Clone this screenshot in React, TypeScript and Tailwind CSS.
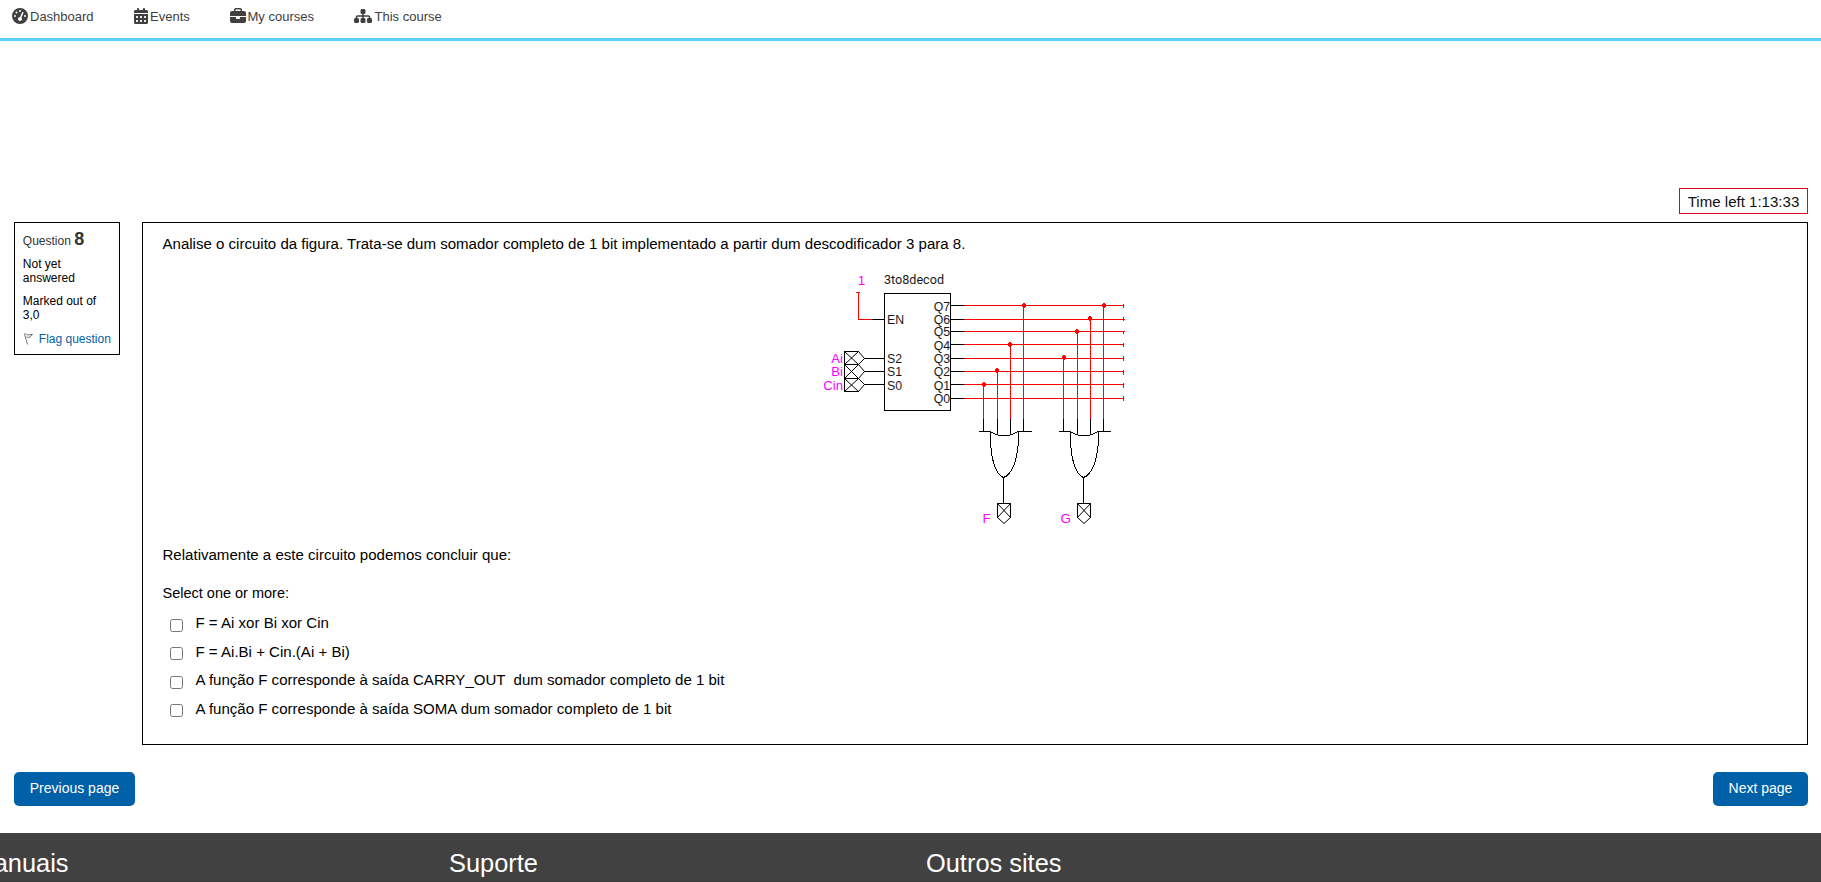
import React from "react";
import { FaGaugeHigh, FaCalendarDays, FaBriefcase, FaSitemap } from "react-icons/fa6";

const outputs = [
  { name: "Q7", y: 305, text: 310.5, end: 1124, tick: [304, 308] },
  { name: "Q6", y: 319, text: 324, end: 1125, tick: [317, 321] },
  { name: "Q5", y: 331, text: 336, end: 1125, tick: [331, 334] },
  { name: "Q4", y: 344, text: 349.5, end: 1124, tick: [343, 347] },
  { name: "Q3", y: 358, text: 363, end: 1124, tick: [356, 361] },
  { name: "Q2", y: 371, text: 376, end: 1124, tick: [370, 375] },
  { name: "Q1", y: 384, text: 389.5, end: 1124, tick: [383, 388] },
  { name: "Q0", y: 398, text: 403, end: 1124, tick: [396, 401] },
];

const inputs = [
  { name: "Ai", pin: "S2", y: 358, top: 351, bottom: 364, text: 363 },
  { name: "Bi", pin: "S1", y: 371, top: 364, bottom: 378, text: 376 },
  { name: "Cin", pin: "S0", y: 384, top: 378, bottom: 391, text: 389.5 },
];

const taps = [
  { x: 983, dot: 982, y: 384 },
  { x: 997, dot: 995, y: 370 },
  { x: 1010, dot: 1008, y: 344 },
  { x: 1023, dot: 1022, y: 305 },
  { x: 1063, dot: 1062, y: 357 },
  { x: 1077, dot: 1075, y: 331 },
  { x: 1090, dot: 1088, y: 318 },
  { x: 1103, dot: 1102, y: 305 },
];

function OrGate({ dx, barEnd }: { dx: number; barEnd: number }) {
  return (
    <g transform={`translate(${dx} 0)`}>
      <path d="M983.5 419V431.5M997.5 419V434M1010.5 419V434M1023.5 419V431.5" />
      <path d={`M979 431.5H990L994 433.5L999 435.5H1009L1014 433.5L1018.5 431.5H${barEnd}`} />
      <path d="M990.5 432V440C991 460 996 475 1003.5 477.5C1012 475 1017.5 460 1018.5 440V432" />
      <path d="M1003.5 477V503M997.5 517.5V503.5H1010.5V517.5" />
      <path
        d="M997.5 517.5L1004 523.5L1010.5 517.5M997.5 503.5L1010.5 517.5M1010.5 503.5L997.5 517.5"
        shapeRendering="geometricPrecision"
      />
    </g>
  );
}

function Circuit() {
  return (
    <svg
      width="310"
      height="260"
      viewBox="820 270 310 260"
      fill="none"
      stroke="#000"
      strokeWidth="1"
      shapeRendering="crispEdges"
      className="block"
    >
      <rect x="884.5" y="293.5" width="66" height="117" />
      <path d="M856 292.5H860M858.5 292V319.5H872" stroke="#f00" />
      <path d="M872 319.5H884" />
      {outputs.map((o) => (
        <g key={o.name}>
          <path d={`M951 ${o.y + 0.5}H964`} />
          <path d={`M964 ${o.y + 0.5}H${o.end}M1123.5 ${o.tick[0]}V${o.tick[1]}`} stroke="#f00" />
        </g>
      ))}
      {taps.map((t) => (
        <g key={t.x} stroke="#f00">
          <path d={`M${t.x + 0.5} ${t.y}V419`} />
          <path d={`M${t.dot} ${t.y - 1}h4v3h-4zM${t.dot + 1} ${t.y - 2}h2v5h-2z`} fill="#f00" stroke="none" />
        </g>
      ))}
      {inputs.map((i) => (
        <g key={i.name}>
          <path d={`M858.5 ${i.top + 0.5}H844.5V${i.bottom + 0.5}H858.5M864 ${i.y + 0.5}H884`} />
          <path
            d={`M858.5 ${i.top + 0.5}L864.5 ${i.y + 0.5}L858.5 ${i.bottom + 0.5}M844.5 ${i.top + 0.5}L858.5 ${i.bottom + 0.5}M858.5 ${i.top + 0.5}L844.5 ${i.bottom + 0.5}`}
            shapeRendering="geometricPrecision"
          />
        </g>
      ))}
      <OrGate dx={0} barEnd={1032} />
      <OrGate dx={80} barEnd={1031} />
      <g stroke="none" fill="#1a1a1a" fontSize="12.3">
        <text x="884" y="284" textLength="60" lengthAdjust="spacingAndGlyphs" fontSize="12.5" fontFamily="Roboto">3to8decod</text>
        <text x="887" y="324">EN</text>
        {inputs.map((i) => (
          <text key={i.pin} x="887" y={i.text}>{i.pin}</text>
        ))}
        {outputs.map((o) => (
          <text key={o.name} x="933.8" y={o.text}>{o.name}</text>
        ))}
      </g>
      <g stroke="none" fill="#f0f" fontSize="13.5">
        <text x="857.7" y="284.5">1</text>
        {inputs.map((i) => (
          <text key={i.name} x="843" y={i.text} fontSize="13.1" textAnchor="end">{i.name}</text>
        ))}
        <text x="982.5" y="523">F</text>
        <text x="1060.5" y="523">G</text>
      </g>
    </svg>
  );
}

const options = [
  "F = Ai xor Bi xor Cin",
  "F = Ai.Bi + Cin.(Ai + Bi)",
  "A função F corresponde à saída CARRY_OUT \u00a0dum somador completo de 1 bit",
  "A função F corresponde à saída SOMA dum somador completo de 1 bit",
];

export default function App() {
  return (
    <div className="flex h-[882px] w-[1821px] flex-col overflow-hidden bg-white font-['Liberation_Sans',Arial,sans-serif] text-[15.05px] text-black">
      <header className="flex h-[41px] shrink-0 items-start border-b-3 border-[#5bcfff] pt-[9px] pl-3 text-[13px] leading-4 text-[#404041]">
        <a className="flex w-[121.5px] gap-0.5"><FaGaugeHigh size={16} className="-mt-px" />Dashboard</a>
        <a className="flex w-[96px] gap-[2.5px]"><FaCalendarDays size={16} className="-mt-px w-[14px]" />Events</a>
        <a className="flex w-[124.5px] gap-0.5"><FaBriefcase size={16} className="-mt-px" />My courses</a>
        <a className="flex gap-[2.5px]"><FaSitemap size={18} className="-mt-0.5" />This course</a>
      </header>

      <main className="flex h-[792px] shrink-0 flex-col pr-[13px] pl-3.5 pt-[147px]">
        <div className="flex h-[26px] w-[129px] items-center justify-center self-end border border-[#e00020] pt-0.5 text-[#111]">
          Time left 1:13:33
        </div>
        <div className="mt-2 flex items-start justify-between">
          <aside className="h-[133px] w-[106px] border border-black pl-[7.8px] text-[12px] leading-[14px]">
            <h3 className="mt-1.5 h-[20px] leading-[20px] text-[#333]">
              Question <b className="text-[18px]">8</b>
            </h3>
            <p className="mt-2">Not yet<br />answered</p>
            <p className="mt-[9px]">Marked out of<br />3,0</p>
            <a className="mt-2.5 flex text-[#0060a8]">
              <svg width="16" height="14" viewBox="0 0 16 14" fill="none" stroke="#777" strokeWidth="1">
                <path d="M1.3 1.5L4.5 12.5M2.5 1.5L4.5 3L9.5 2.3L8 4L6 5.5L3.5 5" />
              </svg>
              Flag question
            </a>
          </aside>
          <section className="h-[523px] w-[1666px] border border-black pl-[19.5px]">
            <p className="mt-3 leading-[17px]">
              Analise o circuito da figura. Trata-se dum somador completo de 1 bit implementado a partir dum descodificador 3 para 8.
            </p>
            <div className="mt-[18px] ml-[657.5px]"><Circuit /></div>
            <p className="mt-4 leading-[17px]">Relativamente a este circuito podemos concluir que:</p>
            <p className="mt-[22px] text-[14.5px] leading-[17px]">Select one or more:</p>
            <div className="mt-2.5 pl-[7.5px]">
              {options.map((o) => (
                <label key={o} className="flex h-[28.6px] items-start leading-[21px]">
                  <input type="checkbox" className="mt-[6.5px] mr-[12.5px] h-[13px] w-[13px]" />
                  {o}
                </label>
              ))}
            </div>
          </section>
        </div>
        <div className="mt-[27px] flex justify-between text-sm text-white">
          <button className="h-[34px] w-[121px] rounded-[5px] bg-[#0060a8] pb-0.5">Previous page</button>
          <button className="h-[34px] w-[95px] rounded-[5px] bg-[#0060a8] pb-0.5">Next page</button>
        </div>
      </main>

      <footer className="flex h-[49px] shrink-0 border-b border-[#3a3a3a] bg-[#414141] pt-[15px] text-[25.4px] leading-[30px] text-white">
        <h3 className="flex w-[449px] shrink-0"><span className="-ml-[27.5px]">Manuais</span></h3>
        <h3 className="w-[477px] shrink-0">Suporte</h3>
        <h3>Outros sites</h3>
      </footer>
    </div>
  );
}
